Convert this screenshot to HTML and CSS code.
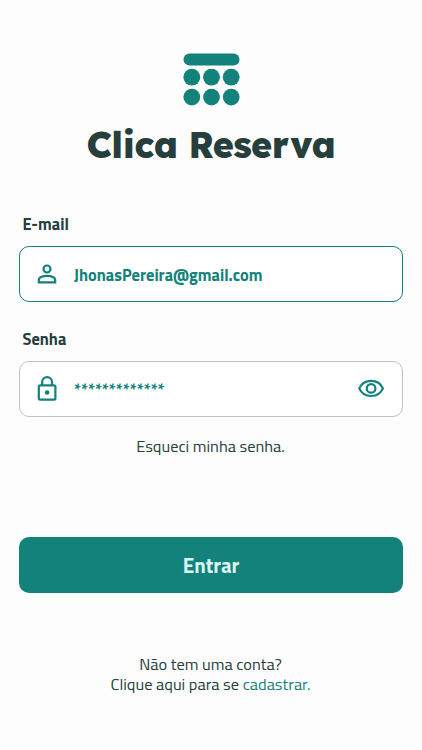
FILE: index.html
```html
<!DOCTYPE html>
<html lang="pt-br">
<head>
    <meta charset="UTF-8">
    <meta name="viewport" content="width=device-width, initial-scale=1.0">
    <title>Clica Reserva</title>
    <link rel="stylesheet" href="styles.css">
</head>
<body>
    <main class="login">
        <header class="brand">
            <svg class="logo" width="57" height="53" viewBox="0 0 57 53">
                <rect x="0.5" y="0.5" width="56" height="12" rx="6"/>
                <circle cx="8.8" cy="24.2" r="8.4"/>
                <circle cx="28.5" cy="24.2" r="8.4"/>
                <circle cx="48.2" cy="24.2" r="8.4"/>
                <circle cx="8.8" cy="44.1" r="8.4"/>
                <circle cx="28.5" cy="44.1" r="8.4"/>
                <circle cx="48.2" cy="44.1" r="8.4"/>
            </svg>
            <h1 class="title">Clica Reserva</h1>
        </header>

        <form class="form">
            <label class="label">E-mail</label>
            <div class="field field-active">
                <svg class="icon" width="28" height="28" viewBox="0 0 28 28">
                    <circle cx="14" cy="9" r="3.5"/>
                    <path d="M5.8 22.4V20c0-2.8 4.8-4.2 8.2-4.2s8.2 1.4 8.2 4.2v2.4z"/>
                </svg>
                <span class="value">JhonasPereira@gmail.com</span>
            </div>

            <label class="label">Senha</label>
            <div class="field">
                <svg class="icon" width="28" height="28" viewBox="0 0 28 28">
                    <rect x="5.8" y="10.4" width="16.6" height="14.2" rx="1.4"/>
                    <path d="M9.2 10.4V7a4.9 4.9 0 0 1 9.8 0v3.4"/>
                    <circle class="dot" cx="14.1" cy="17.5" r="2.3"/>
                </svg>
                <span class="value">*************</span>
                <svg class="icon" width="28" height="28" viewBox="0 0 28 28">
                    <path d="M2.3 13.4C4.3 8.6 8.8 5.8 14.1 5.8S23.9 8.6 25.9 13.4c-2 4.8-6.5 7.6-11.8 7.6S4.3 18.2 2.3 13.4z"/>
                    <circle cx="14.1" cy="13.4" r="4.3"/>
                </svg>
            </div>

            <p class="forgot">Esqueci minha senha.</p>
            <button class="button" type="button">Entrar</button>
        </form>

        <footer class="signup">
            Não tem uma conta?<br>
            Clique aqui para se <a href="#">cadastrar.</a>
        </footer>
    </main>
</body>
</html>
```
FILE: styles.css
```css
*{
    margin: 0;
    padding: 0;
    box-sizing: border-box;
}

body{
    background-color: #fdfdfd;
    color: #263f3d;
    font-family: "Titillium Web", "Noto Sans", sans-serif;
    font-size: 16.4px;
}

.login{
    width: 422px;
    height: 750px;
    padding: 53px 19px 0;
    overflow: hidden;
}

.brand{
    display: flex;
    flex-direction: column;
    align-items: center;
}

.logo{
    fill: #13827a;
}

.title{
    margin-top: 19px;
    font-family: "Lexend", "Outfit", "Inter", sans-serif;
    font-size: 36px;
    font-weight: 800;
    line-height: 40px;
    letter-spacing: -0.4px;
    word-spacing: -1px;
    font-feature-settings: "cv11";
    white-space: nowrap;
}

.form{
    display: flex;
    flex-direction: column;
    margin-top: 47px;
}

.label{
    height: 34px;
    padding-left: 3.5px;
    font-weight: 700;
    line-height: 24px;
}

.field{
    display: flex;
    align-items: center;
    height: 56px;
    padding: 0 17px 0 13px;
    border: 1px solid #c4c0c3;
    border-radius: 10px;
    background-color: #fff;
}

.field-active{
    margin-bottom: 25px;
    border-color: #13827a;
}

.icon{
    flex-shrink: 0;
    fill: none;
    stroke: #13827a;
    stroke-width: 2.2;
}

.dot{
    fill: #13827a;
    stroke: none;
}

.value{
    flex: 1;
    margin-left: 13px;
    color: #13827a;
    font-weight: 700;
    white-space: nowrap;
}

.forgot{
    margin-top: 17px;
    padding-right: 1px;
    line-height: 24px;
    text-align: center;
}

.button{
    height: 56px;
    margin-top: 79px;
    border: none;
    border-radius: 10px;
    background-color: #13827a;
    color: #d9f5f1;
    font-family: inherit;
    font-size: 20.8px;
    font-weight: 700;
}

.signup{
    margin-top: 61px;
    padding-right: 1px;
    line-height: 20px;
    text-align: center;
}

.signup a{
    color: #13827a;
    text-decoration: none;
}
```
